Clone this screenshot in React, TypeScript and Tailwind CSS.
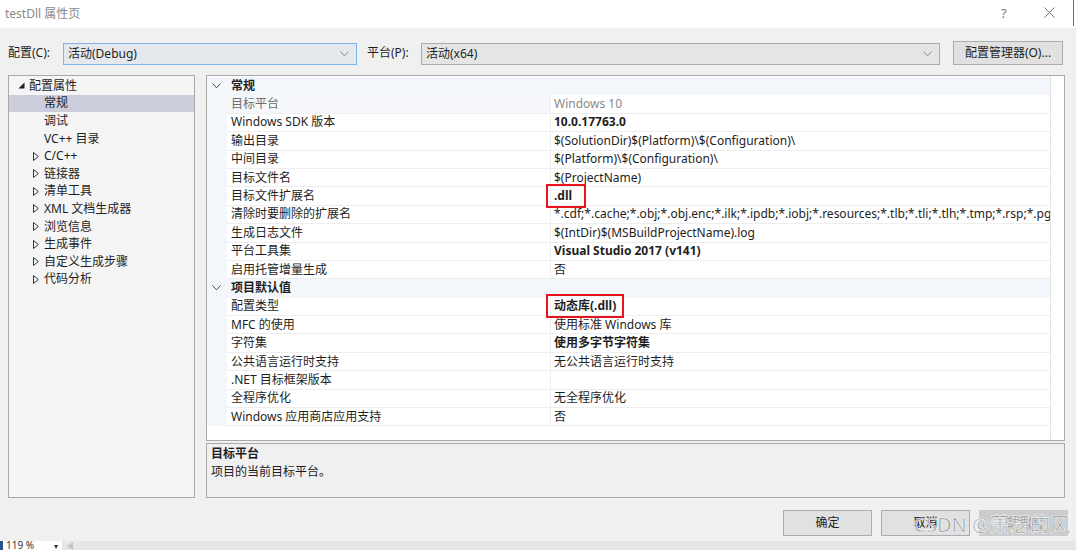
import React from 'react';

const FONT = { fontFamily: '"Noto Sans", "Noto Sans CJK SC", sans-serif' };

type Prop = { name: string; value?: string; bold?: boolean; dim?: boolean; box?: string };
type Group = { title: string; props: Prop[] };

const groups: Group[] = [
  {
    title: '常规',
    props: [
      { name: '目标平台', value: 'Windows 10', dim: true },
      { name: 'Windows SDK 版本', value: '10.0.17763.0', bold: true },
      { name: '输出目录', value: '$(SolutionDir)$(Platform)\\$(Configuration)\\' },
      { name: '中间目录', value: '$(Platform)\\$(Configuration)\\' },
      { name: '目标文件名', value: '$(ProjectName)' },
      { name: '目标文件扩展名', value: '.dll', bold: true, box: '-right-[14px]' },
      {
        name: '清除时要删除的扩展名',
        value: '*.cdf;*.cache;*.obj;*.obj.enc;*.ilk;*.ipdb;*.iobj;*.resources;*.tlb;*.tli;*.tlh;*.tmp;*.rsp;*.pgc;*.pgd;*.meta',
      },
      { name: '生成日志文件', value: '$(IntDir)$(MSBuildProjectName).log' },
      { name: '平台工具集', value: 'Visual Studio 2017 (v141)', bold: true },
      { name: '启用托管增量生成', value: '否' },
    ],
  },
  {
    title: '项目默认值',
    props: [
      { name: '配置类型', value: '动态库(.dll)', bold: true, box: '-right-[8px]' },
      { name: 'MFC 的使用', value: '使用标准 Windows 库' },
      { name: '字符集', value: '使用多字节字符集', bold: true },
      { name: '公共语言运行时支持', value: '无公共语言运行时支持' },
      { name: '.NET 目标框架版本' },
      { name: '全程序优化', value: '无全程序优化' },
      { name: 'Windows 应用商店应用支持', value: '否' },
    ],
  },
];

const tree: { label: string; level: 0 | 1 | 2; selected?: boolean }[] = [
  { label: '配置属性', level: 0 },
  { label: '常规', level: 1, selected: true },
  { label: '调试', level: 1 },
  { label: 'VC++ 目录', level: 1 },
  { label: 'C/C++', level: 2 },
  { label: '链接器', level: 2 },
  { label: '清单工具', level: 2 },
  { label: 'XML 文档生成器', level: 2 },
  { label: '浏览信息', level: 2 },
  { label: '生成事件', level: 2 },
  { label: '自定义生成步骤', level: 2 },
  { label: '代码分析', level: 2 },
];

function Chevron({ className }: { className?: string }) {
  return (
    <svg width="9" height="6" viewBox="0 0 9 6" className={className}>
      <polyline points="0.5,0.5 4.5,4.8 8.5,0.5" fill="none" stroke="currentColor" strokeWidth="1" />
    </svg>
  );
}

function Combo({ text, width, focused }: { text: string; width: string; focused?: boolean }) {
  return (
    <div
      className={`${width} flex h-[22px] items-center justify-between border pl-[4px] pr-[7px] text-[12px] text-[#1e1e1e] ${
        focused ? 'border-[#7eb4ea] bg-[#e5e9ee]' : 'border-[#acacac] bg-[#e5e5e5]'
      }`}
    >
      <span>{text}</span>
      <Chevron className="text-[#8a8a8a]" />
    </div>
  );
}

function TreePanel() {
  return (
    <div className="h-[423px] w-[187px] border border-[#a9a9a9] bg-[#f5f5f5] pt-[1px]">
      {tree.map((item) => (
        <div
          key={item.label}
          className={`flex h-[17.6px] items-center text-[12px] text-[#1e1e1e] ${item.selected ? 'bg-[#cccedb]' : ''}`}
        >
          {item.level === 0 && (
            <>
              <svg width="7" height="7" viewBox="0 0 7 7" className="ml-[9px] mr-[4px]">
                <polygon points="6.5,0.5 6.5,6.5 0.5,6.5" fill="#1e1e1e" />
              </svg>
              <span>{item.label}</span>
            </>
          )}
          {item.level === 1 && <span className="ml-[35px]">{item.label}</span>}
          {item.level === 2 && (
            <>
              <svg width="6" height="9" viewBox="0 0 6 9" className="ml-[24px] mr-[5px]">
                <polygon points="0.5,0.5 5.3,4.5 0.5,8.5" fill="none" stroke="#333" strokeWidth="1" />
              </svg>
              <span>{item.label}</span>
            </>
          )}
        </div>
      ))}
    </div>
  );
}

function PropRow({ prop }: { prop: Prop }) {
  return (
    <div className="flex h-[18.4px] text-[12px]">
      <div className="w-[20px] shrink-0 bg-[#f3f6fb]" />
      <div
        className={`flex w-[324px] shrink-0 items-center border-b border-r border-[#eeeeee] pl-[4px] ${
          prop.dim ? 'bg-[#f5f7fa] text-[#6d6d6d]' : 'text-[#1e1e1e]'
        }`}
      >
        {prop.name}
      </div>
      <div
        className={`flex min-w-0 flex-1 items-center whitespace-nowrap border-b border-[#eeeeee] pl-[3px] ${
          prop.box ? 'overflow-visible' : 'overflow-hidden'
        } ${prop.dim ? 'text-[#8a8a8a]' : 'text-[#1e1e1e]'} ${prop.bold ? 'font-bold' : ''}`}
      >
        {prop.box ? (
          <span className="relative">
            {prop.value}
            <span className={`absolute -bottom-[3px] -left-[8px] -top-[3px] border-2 border-[#e8141b] ${prop.box}`} />
          </span>
        ) : (
          prop.value
        )}
      </div>
    </div>
  );
}

function PropertyGrid() {
  return (
    <div className="flex h-[366px] border border-[#a9a9a9] bg-white">
      <div className="w-[844px] border-r border-[#e3e3e3] pt-[1px]">
        {groups.map((g) => (
          <div key={g.title}>
            <div className="flex h-[18.4px] items-center bg-[#f3f6fb] text-[12px] font-bold text-[#1e1e1e]">
              <Chevron className="ml-[5px] mr-[10px] text-[#444]" />
              {g.title}
            </div>
            {g.props.map((p) => (
              <PropRow key={p.name} prop={p} />
            ))}
          </div>
        ))}
      </div>
      <div className="flex-1" />
    </div>
  );
}

function Button({ label, disabled }: { label: string; disabled?: boolean }) {
  return (
    <div
      className={`flex h-[26px] w-[89px] items-center justify-center text-[12px] ${
        disabled ? 'bg-[#cccccc] text-[#9a9a9a]' : 'border border-[#adadad] bg-[#e1e1e1] text-[#1e1e1e]'
      }`}
    >
      {label}
    </div>
  );
}

export default function App() {
  return (
    <div className="flex h-[550px] w-[1076px] flex-col overflow-hidden bg-[#f0f0f0]" style={FONT}>
      {/* title bar */}
      <div className="relative flex h-[28px] shrink-0 items-center bg-white pl-[5px] text-[12px] text-[#8a8a8a]">
        <span>testDll 属性页</span>
        <span className="absolute left-[1001px] top-[4px] text-[13px] text-[#777]">?</span>
        <svg width="11" height="11" viewBox="0 0 11 11" className="absolute left-[1044px] top-[7px]">
          <path d="M0.5 0.5 L10.5 10.5 M10.5 0.5 L0.5 10.5" stroke="#777" strokeWidth="1" />
        </svg>
        <div className="absolute left-[1073px] top-0 h-[26px] w-[1px] bg-[#6f6f6f]" />
      </div>

      {/* configuration row */}
      <div className="mt-[13px] flex h-[24px] items-end pl-[8px] text-[12px] text-[#1e1e1e]">
        <span className="mb-[3px] w-[55px]">配置(C):</span>
        <Combo text="活动(Debug)" width="w-[294px]" focused />
        <span className="mb-[3px] ml-[10px] w-[54px]">平台(P):</span>
        <Combo text="活动(x64)" width="w-[519px]" />
        <div className="ml-[13px] flex h-[24px] w-[110px] items-center justify-center border border-[#adadad] bg-[#e1e1e1]">
          配置管理器(O)...
        </div>
      </div>

      {/* main panels */}
      <div className="mt-[10px] flex gap-[11px] pl-[8px]">
        <TreePanel />
        <div className="flex w-[859px] flex-col gap-[2px]">
          <PropertyGrid />
          <div className="h-[55px] border border-[#a9a9a9] bg-[#f0f0f0] pl-[4px] pt-[1px] text-[12px] leading-[18px] text-[#1e1e1e]">
            <div className="font-bold">目标平台</div>
            <div>项目的当前目标平台。</div>
          </div>
        </div>
      </div>

      {/* buttons */}
      <div className="relative mt-[12px] flex justify-end gap-[9px] pr-[8px]">
        <Button label="确定" />
        <Button label="取消" />
        <Button label="应用(A)" disabled />
        <span
          className="absolute right-[6px] top-[1px] text-[20px] leading-[28px] text-[#8e8e8e]"
          style={{ WebkitTextStroke: '0.6px rgba(255,255,255,0.95)' }}
        >
          CSDN @萧瑟的风
        </span>
      </div>

      {/* editor status strip */}
      <div className="mt-[5px] flex h-[9px] overflow-hidden bg-[#e6e6e6]">
        <div className="flex w-[62px] bg-white">
          <div className="w-[3px] bg-[#2d4f8a]" />
          <span className="ml-[3px] text-[10px] leading-[9px] text-[#333]">119 %</span>
          <span className="ml-auto mr-[4px] text-[8px] leading-[9px] text-[#333]">▾</span>
        </div>
        <svg width="6" height="8" viewBox="0 0 6 8" className="ml-[5px] mt-[1px]">
          <polygon points="6,0 6,8 0,4" fill="#c4c4c4" />
        </svg>
      </div>
    </div>
  );
}
